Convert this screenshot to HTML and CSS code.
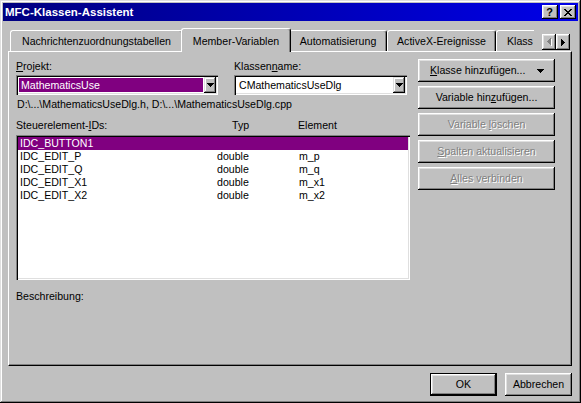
FILE: index.html
```html
<!DOCTYPE html>
<html lang="de">
<head>
<meta charset="utf-8">
<title>MFC-Klassen-Assistent</title>
<link rel="stylesheet" href="styles.css">
</head>
<body>
<div class="window">
  <div class="titlebar">
    <span class="title">MFC-Klassen-Assistent</span>
    <div class="tbtns">
      <span class="tbtn help">?</span>
      <span class="tbtn">
        <svg width="8" height="7" viewBox="0 0 8 7" shape-rendering="crispEdges">
          <path d="M0 0h2v1h-2z M6 0h2v1h-2z M1 1h2v1h-2z M5 1h2v1h-2z M2 2h4v1h-4z M3 3h2v1h-2z M2 4h4v1h-4z M1 5h2v1h-2z M5 5h2v1h-2z M0 6h2v1h-2z M6 6h2v1h-2z" fill="#000"/>
        </svg>
      </span>
    </div>
  </div>

  <div class="tabrow">
    <div class="tabs">
      <div class="tab t1">Nachrichtenzuordnungstabellen</div>
      <div class="tab t2 sel">Member-Variablen</div>
      <div class="tab t3">Automatisierung</div>
      <div class="tab t4">ActiveX-Ereignisse</div>
      <div class="tab t5">Klass</div>
    </div>
    <div class="scroller">
      <span class="sbtn">
        <svg width="5" height="8" viewBox="0 0 5 8" shape-rendering="crispEdges">
          <path d="M4 1h1v7h-1z M3 2h1v5h-1z M2 3h1v3h-1z M1 4h1v1h-1z" fill="#fff"/>
          <path d="M3 0h1v7h-1z M2 1h1v5h-1z M1 2h1v3h-1z M0 3h1v1h-1z" fill="#808080"/>
        </svg>
      </span>
      <span class="sbtn">
        <svg width="4" height="7" viewBox="0 0 4 7" shape-rendering="crispEdges">
          <path d="M0 0h1v7h-1z M1 1h1v5h-1z M2 2h1v3h-1z M3 3h1v1h-1z" fill="#000"/>
        </svg>
      </span>
    </div>
  </div>

  <div class="panel">
    <div class="left">
      <div class="fields">
        <div class="field f1">
          <div class="label"><u>P</u>rojekt:</div>
          <div class="combo">
            <div class="value selected">MathematicsUse</div>
            <span class="dd">
              <svg width="7" height="4" viewBox="0 0 7 4" shape-rendering="crispEdges"><path d="M0 0h7v1h-7z M1 1h5v1h-5z M2 2h3v1h-3z M3 3h1v1h-1z" fill="#000"/></svg>
            </span>
          </div>
        </div>
        <div class="field f2">
          <div class="label">Klassen<u>n</u>ame:</div>
          <div class="combo">
            <div class="value">CMathematicsUseDlg</div>
            <span class="dd">
              <svg width="7" height="4" viewBox="0 0 7 4" shape-rendering="crispEdges"><path d="M0 0h7v1h-7z M1 1h5v1h-5z M2 2h3v1h-3z M3 3h1v1h-1z" fill="#000"/></svg>
            </span>
          </div>
        </div>
      </div>
      <div class="path">D:\...\MathematicsUseDlg.h, D:\...\MathematicsUseDlg.cpp</div>
      <div class="listhead">
        <span>Steuerelement-<u>I</u>Ds:</span>
        <span>Typ</span>
        <span>Element</span>
      </div>
      <div class="listbox">
        <div class="row sel"><span>IDC_BUTTON1</span><span></span><span></span></div>
        <div class="row"><span>IDC_EDIT_P</span><span>double</span><span>m_p</span></div>
        <div class="row"><span>IDC_EDIT_Q</span><span>double</span><span>m_q</span></div>
        <div class="row"><span>IDC_EDIT_X1</span><span>double</span><span>m_x1</span></div>
        <div class="row"><span>IDC_EDIT_X2</span><span>double</span><span>m_x2</span></div>
      </div>
      <div class="desc">Beschreibung:</div>
    </div>
    <div class="right">
      <div class="btn split">
        <span><u>K</u>lasse hinzufügen...</span>
        <svg width="7" height="4" viewBox="0 0 7 4" shape-rendering="crispEdges"><path d="M0 0h7v1h-7z M1 1h5v1h-5z M2 2h3v1h-3z M3 3h1v1h-1z" fill="#000"/></svg>
      </div>
      <div class="btn"><span>Variable hin<u>z</u>ufügen...</span></div>
      <div class="btn disabled"><span>Variable <u>l</u>öschen</span></div>
      <div class="btn disabled"><span><u>S</u>palten aktualisieren</span></div>
      <div class="btn disabled"><span><u>A</u>lles verbinden</span></div>
    </div>
  </div>

  <div class="footer">
    <div class="btn fbtn default"><span>OK</span></div>
    <div class="btn fbtn"><span>Abbrechen</span></div>
  </div>
</div>
</body>
</html>
```
FILE: styles.css
```css
* {
  box-sizing: border-box;
}

html,
body {
  margin: 0;
  padding: 0;
  background: #c0c0c0;
}

body {
  font-family: "Liberation Sans", Arial, sans-serif;
  font-size: 10.6px;
  color: #000;
}

u {
  text-decoration: underline;
  text-underline-offset: 1px;
}

.window {
  width: 581px;
  height: 403px;
  padding: 3px;
  background: #c0c0c0;
  box-shadow: inset -1px -1px #000, inset 1px 1px #dfdfdf, inset -2px -2px #808080, inset 2px 2px #fff;
  display: flex;
  flex-direction: column;
}

/* title bar */
.titlebar {
  height: 18px;
  flex: none;
  background: linear-gradient(90deg, #000080, #0000e8);
  display: flex;
  align-items: center;
  justify-content: space-between;
  padding: 0 2px 0 2px;
}

.title {
  color: #fff;
  font-weight: bold;
  font-size: 11.5px;
}

.tbtns {
  display: flex;
  gap: 2px;
}

.tbtn {
  width: 16px;
  height: 14px;
  background: #c0c0c0;
  box-shadow: inset -1px -1px #000, inset 1px 1px #fff, inset -2px -2px #808080, inset 2px 2px #dfdfdf;
  display: flex;
  align-items: center;
  justify-content: center;
}

.tbtn.help {
  font-weight: bold;
  font-size: 11px;
  line-height: 14px;
  padding-right: 1px;
}

/* tabs */
.tabrow {
  display: flex;
  height: 24px;
  flex: none;
  margin: 7px 0 -1px 0;
  padding-left: 7px;
  position: relative;
  z-index: 1;
}

.tabs {
  display: flex;
  width: 524px;
  height: 24px;
  overflow: hidden;
  flex: none;
}

.tab {
  flex: none;
  height: 21px;
  margin-top: 2px;
  padding-top: 4px;
  line-height: 13px;
  text-align: center;
  white-space: nowrap;
  background: #c0c0c0;
  border-left: 1px solid #fff;
  border-top: 1px solid #fff;
  border-right: 1px solid #000;
  border-radius: 3px 3px 0 0;
  box-shadow: inset -1px 0 #808080;
}

.tab.sel {
  height: 24px;
  margin-top: 0;
  margin-left: -2px;
  margin-right: -2px;
  padding-top: 6px;
  position: relative;
  z-index: 1;
}

.t1 { width: 173px; }
.t2 { width: 110px; }
.t3 { width: 98px; }
.t4 { width: 109px; }
.t5 { width: 80px; text-align: left; padding-left: 10px; }

.scroller {
  display: flex;
  margin-left: 8px;
  margin-top: 6px;
  height: 16px;
}

.sbtn {
  width: 14px;
  height: 16px;
  background: #c0c0c0;
  box-shadow: inset -1px -1px #000, inset 1px 1px #fff, inset -2px -2px #808080, inset 2px 2px #dfdfdf;
  display: flex;
  align-items: center;
  justify-content: center;
}

/* tab page */
.panel {
  flex: none;
  margin-left: 5px;
  width: 564px;
  height: 315px;
  border-left: 1px solid #fff;
  border-top: 1px solid #fff;
  border-right: 1px solid #000;
  border-bottom: 1px solid #000;
  box-shadow: inset -1px -1px #808080;
  display: flex;
  align-items: flex-start;
  padding: 8px 0 0 7px;
}

.left {
  width: 394px;
  display: flex;
  flex-direction: column;
}

.fields {
  display: flex;
  gap: 16px;
}

.f1 { width: 202px; }
.f2 { width: 173px; }

.label {
  height: 13px;
  line-height: 13px;
}

.combo {
  margin-top: 2px;
  height: 20px;
  background: #fff;
  box-shadow: inset 1px 1px #808080, inset 2px 2px #000, inset -1px -1px #fff, inset -2px -2px #dfdfdf;
  display: flex;
  padding: 2px;
}

.combo .value {
  flex: 1;
  margin: 1px;
  padding-left: 2px;
  line-height: 14px;
  white-space: nowrap;
  overflow: hidden;
}

.combo .value.selected {
  background: #800080;
  color: #fff;
}

.dd {
  width: 12px;
  height: 16px;
  flex: none;
  background: #c0c0c0;
  box-shadow: inset -1px -1px #000, inset 1px 1px #dfdfdf, inset -2px -2px #808080, inset 2px 2px #fff;
  display: flex;
  align-items: center;
  justify-content: center;
}

.path {
  margin-top: 3px;
  line-height: 13px;
  padding-left: 1px;
  white-space: nowrap;
}

.listhead {
  margin-top: 8px;
  line-height: 13px;
  display: grid;
  grid-template-columns: 216px 66px 1fr;
}

.listbox {
  margin-top: 3px;
  height: 145px;
  background: #fff;
  box-shadow: inset 1px 1px #808080, inset 2px 2px #000, inset -1px -1px #fff, inset -2px -2px #dfdfdf;
  padding: 2px;
}

.row {
  display: grid;
  grid-template-columns: 197px 82px 1fr;
  height: 13px;
  line-height: 13px;
  padding-left: 2px;
  white-space: nowrap;
}

.row.sel {
  background: #800080;
  color: #fff;
}

.desc {
  margin-top: 10px;
  line-height: 13px;
}

.right {
  margin-left: 8px;
  margin-top: -1px;
  width: 137px;
  display: flex;
  flex-direction: column;
  gap: 4px;
}

.btn {
  height: 23px;
  background: #c0c0c0;
  box-shadow: inset -1px -1px #000, inset 1px 1px #fff, inset -2px -2px #808080, inset 2px 2px #dfdfdf;
  display: flex;
  align-items: center;
  justify-content: center;
  line-height: 13px;
  white-space: nowrap;
}

.btn.split {
  justify-content: space-between;
  padding: 0 11px 0 12px;
}

.btn.disabled {
  color: #808080;
  text-shadow: 1px 1px 0 #fff;
}

/* footer */
.footer {
  display: flex;
  justify-content: flex-end;
  gap: 8px;
  margin-top: 7px;
  padding-right: 6px;
}

.fbtn {
  width: 67px;
}

.btn.default {
  border: 1px solid #000;
}
```
